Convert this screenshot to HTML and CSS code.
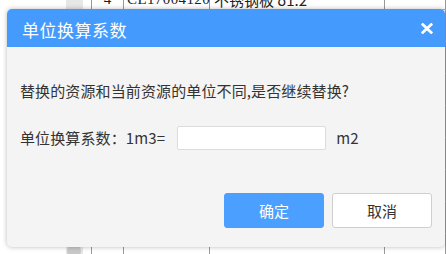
FILE: index.html
```html
<!DOCTYPE html>
<html lang="zh-CN">
<head>
<meta charset="utf-8">
<title>单位换算系数</title>
<link rel="stylesheet" href="styles.css">
</head>
<body>
<div class="page">
  <div class="gutter"></div>
  <div class="scrollcol"><span class="thumb"></span></div>
  <div class="gap"></div>
  <div class="grid">
    <div class="row first">
      <div class="cell c1">4</div>
      <div class="cell c2">CL17004120</div>
      <div class="cell c3">不锈钢板 δ1.2</div>
      <div class="cell c4"></div>
    </div>
    <div class="row"><div class="cell c1"></div><div class="cell c2"></div><div class="cell c3"></div><div class="cell c4"></div></div>
    <div class="row"><div class="cell c1"></div><div class="cell c2"></div><div class="cell c3"></div><div class="cell c4"></div></div>
    <div class="row"><div class="cell c1"></div><div class="cell c2"></div><div class="cell c3"></div><div class="cell c4"></div></div>
    <div class="row"><div class="cell c1"></div><div class="cell c2"></div><div class="cell c3"></div><div class="cell c4"></div></div>
    <div class="row"><div class="cell c1"></div><div class="cell c2"></div><div class="cell c3"></div><div class="cell c4"></div></div>
    <div class="row"><div class="cell c1"></div><div class="cell c2"></div><div class="cell c3"></div><div class="cell c4"></div></div>
    <div class="row"><div class="cell c1"></div><div class="cell c2"></div><div class="cell c3"></div><div class="cell c4"></div></div>
    <div class="row"><div class="cell c1"></div><div class="cell c2"></div><div class="cell c3"></div><div class="cell c4"></div></div>
  </div>
</div>

<div class="dialog">
  <div class="dlg-head">
    <span class="dlg-title">单位换算系数</span>
    <span class="dlg-close" aria-label="关闭">
      <svg width="12" height="11" viewBox="0 0 12 11"><path d="M1.8 1.5 L10.2 9.5 M10.2 1.5 L1.8 9.5" stroke="#fff" stroke-width="2.7" stroke-linecap="square"/></svg>
    </span>
  </div>
  <div class="dlg-body">
    <p class="msg">替换的资源和当前资源的单位不同,是否继续替换?</p>
    <div class="form-row">
      <span class="label">单位换算系数：1m3=</span>
      <input class="factor" type="text">
      <span class="unit">m2</span>
    </div>
    <div class="actions">
      <button class="btn primary">确定</button>
      <button class="btn">取消</button>
    </div>
  </div>
</div>
</body>
</html>
```
FILE: styles.css
```css
html, body {
  margin: 0;
  padding: 0;
  width: 446px;
  height: 254px;
  overflow: hidden;
  background: #fff;
  font-family: "Noto Sans CJK SC", "Noto Sans", sans-serif;
}

.page {
  display: flex;
  height: 254px;
}
.gutter { width: 66px; }
.scrollcol {
  width: 17px;
  background: #e7e7e7;
  position: relative;
}
.thumb {
  position: absolute;
  left: 1px;
  top: 244px;
  width: 14px;
  height: 14px;
  border-radius: 50%;
  background: #c8c8c8;
}
.gap { width: 8px; }

.grid {
  flex: 1;
  margin-top: -22px;
  border-left: 1px solid #999;
}
.row {
  display: flex;
  height: 31px;
  border-bottom: 1px solid #aaa;
}
.cell {
  border-right: 1px solid #999;
  font-size: 15px;
  color: #222;
  line-height: 1;
  padding-top: 14px;
  box-sizing: border-box;
  white-space: nowrap;
  font-family: "Liberation Serif", "Noto Sans CJK SC", serif;
}
.c1 { width: 32px; text-align: center; }
.c2 { width: 86px; padding-left: 3px; letter-spacing: 0.4px; }
.c3 { width: 175px; padding-left: 4px; font-family: "Noto Sans CJK SC", serif; }
.c4 { flex: 1; }

.dialog {
  position: absolute;
  left: 7px;
  top: 9px;
  width: 438px;
  height: 238px;
  background: #f4f4f4;
  border-radius: 5px;
  box-shadow: 0 0 5px rgba(0, 0, 0, 0.28);
  overflow: hidden;
  display: flex;
  flex-direction: column;
}
.dlg-head {
  height: 38px;
  background: #449bfd;
  display: flex;
  align-items: center;
  justify-content: space-between;
  padding: 0 12px 0 15px;
  color: #fff;
}
.dlg-title {
  font-size: 17px;
  letter-spacing: 0.5px;
  line-height: 1;
  margin-top: 3px;
}
.dlg-close {
  display: flex;
  margin-top: 1px;
}

.dlg-body {
  flex: 1;
  padding: 34px 13px 0 13px;
  color: #333;
  font-size: 15px;
  letter-spacing: 0.12px;
  display: flex;
  flex-direction: column;
}
.msg {
  margin: 0;
  line-height: 20px;
}
.form-row {
  display: flex;
  align-items: center;
  margin-top: 25px;
  height: 24px;
}
.label { line-height: 20px; }
.factor {
  margin: 0 10px 0 12px;
  width: 149px;
  height: 24px;
  box-sizing: border-box;
  border: 1px solid #dcdcdc;
  border-radius: 2px;
  background: #fff;
  outline: none;
  padding: 0 6px;
}
.unit { line-height: 20px; }

.actions {
  display: flex;
  justify-content: flex-end;
  gap: 8px;
  margin-top: 43px;
}
.btn {
  width: 100px;
  height: 35px;
  box-sizing: border-box;
  border: 1px solid #cfcfcf;
  border-radius: 3px;
  background: #fff;
  color: #333;
  font-family: "Noto Sans CJK SC", sans-serif;
  font-size: 15px;
  padding: 0;
}
.btn.primary {
  background: #4ba0ff;
  border-color: #4ba0ff;
  color: #fff;
}
```
